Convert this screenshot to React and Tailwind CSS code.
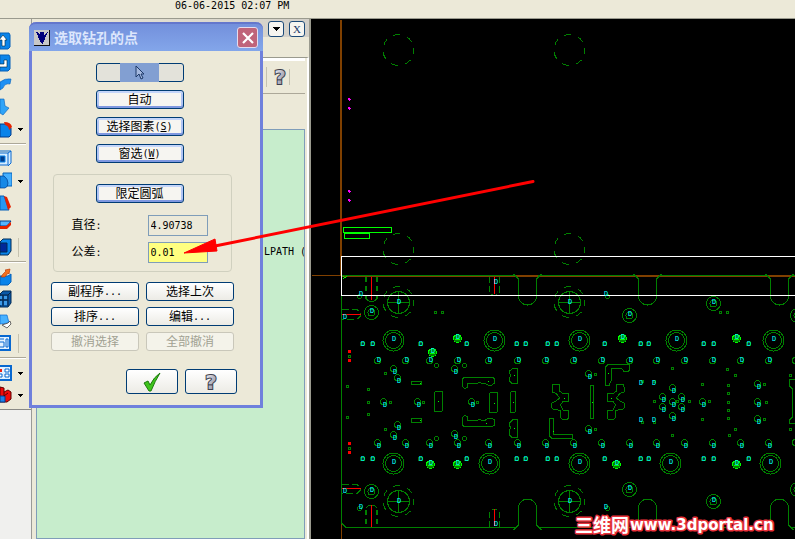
const MONO = "font-['DejaVu_Sans_Mono','Noto_Sans_CJK_SC',monospace]";

const blue = '#0a84ea';
const navy = '#003c8c';

const toolGroups = [
  [
    {
      label: 'Extrude up',
      art: (
        <>
          <path d="M0 1h9l1 2v12l-2 2H0z" fill={blue} stroke="#0560b8" />
          <path d="M2 14V8H-1l4-5 4 5H5v6z" fill="#fff" stroke="#023" strokeWidth=".6" />
        </>
      ),
    },
    {
      label: 'Extrude side',
      art: (
        <>
          <path d="M0 1h9l1 2v12l-2 2H0z" fill={blue} stroke="#0560b8" />
          <path d="M0 10h4V6h3v7H0" fill="#fff" stroke="#023" strokeWidth=".6" />
        </>
      ),
    },
    { label: 'Sweep', art: <path d="M0 6q5-4 11-3l-1 5q-5-1-7 4L0 14z" fill="#1e90f4" stroke="#0560b8" strokeWidth=".6" /> },
    { label: 'Loft', art: <path d="M0 1h4l1 7 4 2-6 7-3-2z" fill="#30a4f8" stroke="#0560b8" strokeWidth=".6" /> },
    {
      label: 'Fillet',
      caret: true,
      art: (
        <>
          <path d="M0 4h7l4 4v7l-2 2H0z" fill={blue} stroke={navy} />
          <path d="M4 2q7 0 8 5l-3 3q0-4-4-5z" fill="#e42200" />
        </>
      ),
    },
  ],
  [
    {
      label: 'Shell',
      art: (
        <>
          <path d="M0 3h8v12H0M8 3l3-2v12l-3 3M0 1h11" fill="#d6ecff" stroke="#0868d0" />
          <path d="M0 6h5v6H0z" fill={navy} stroke={blue} />
        </>
      ),
    },
    {
      label: 'Boolean',
      caret: true,
      art: (
        <>
          <path d="M3 1h9v13H3z" fill="#46b0ff" stroke="#0560b8" />
          <path d="M0 4h4q4 3 4 7t-3 5H0z" fill="#1688e6" stroke={navy} strokeWidth=".7" />
        </>
      ),
    },
    {
      label: 'Draft face',
      art: (
        <>
          <path d="M0 2h4l5 14H0z" fill="#2698f4" stroke="#0560b8" />
          <path d="M4 2l3 1 4 10-3 3z" fill="#e42200" />
        </>
      ),
    },
    {
      label: 'Trim solid',
      art: (
        <>
          <path d="M0 5h11l-4 5H0z" fill="#56b4ff" stroke={navy} />
          <path d="M0 10h6l5-4v3l-4 4H0z" fill="#e42200" />
        </>
      ),
    },
    {
      label: 'Thicken',
      split: true,
      art: (
        <>
          <path d="M0 4l3-3h8v12l-3 4H0z" fill={blue} stroke="#012a55" />
          <path d="M0 5h7v9H0z" fill="#00289a" stroke="#012a55" />
        </>
      ),
    },
  ],
  [
    {
      label: 'Remove faces',
      art: (
        <>
          <path d="M0 8h8l3-2v8l-3 3H0z" fill={blue} stroke="#0560b8" />
          <path d="M3 6l3-3-1-1 5-1-1 5-1-1-3 4H1z" fill="#f4701c" stroke="#b03000" strokeWidth=".6" />
        </>
      ),
    },
    {
      label: 'Box',
      art: (
        <>
          <path d="M0 4l3-3h8v12l-3 4H0z" fill="#0a58a8" stroke="#012a55" />
          <path d="M0 5h8v11M3 5v11M0 10h8M8 5l3-3" fill="none" stroke="#0b2240" />
          <path d="M0 6h2v3H0zM4 6h3v3H4zM0 11h2v4H0zM4 11h3v4H4z" fill="#3c9ae8" />
        </>
      ),
    },
    {
      label: 'Surface',
      art: (
        <>
          <path d="M0 3h7l2 8-9 1z" fill="#48b2ff" stroke="#0868d0" strokeWidth=".7" />
          <path d="M2 13l6-2 2-2 1 3-4 4z" fill="#fff" stroke="#444" strokeWidth=".8" />
        </>
      ),
    },
    {
      label: 'Layout',
      split: true,
      art: (
        <>
          <path d="M0 2h10v14H0" fill="#e4f2ff" stroke="#0868d0" strokeWidth="2" />
          <path d="M0 5h4M0 8h4v5H0M6 5h2v8H6z" fill="none" stroke="#0868d0" />
        </>
      ),
    },
  ],
  [
    {
      label: 'Views',
      caret: true,
      art: (
        <>
          <path d="M0 2h11v14H0" fill="#e4f2ff" stroke="#0868d0" strokeWidth="2" />
          <path d="M-1 5h3v3h-3z" fill="#f02010" />
          <path d="M5 5h4v3H5zM5 10h4v3H5zM-1 10h3v3h-3z" fill="#fff" stroke="#0868d0" />
        </>
      ),
    },
    {
      label: 'Planes',
      caret: true,
      art: (
        <>
          <path d="M0 1l4 1v4l4-2 3 2v7l-4 3H0z" fill="#f00a0a" stroke="#5a0000" />
          <path d="M0 10h5v6H0z" fill="#1c80e8" stroke={navy} />
          <path d="M4 6v4l4-3" fill="none" stroke="#5a0000" />
        </>
      ),
    },
  ],
];

// canvas data, in page pixels
const bossX = [377, 405, 429, 457, 488, 517, 545, 573, 601, 629, 656, 684, 712, 740, 768];
const pinX = [362, 372, 420, 466, 516, 525, 547, 556, 604, 640, 648, 703, 713, 748];
const pads = [[457, 338], [432, 352], [622, 338], [736, 338], [430, 464], [457, 464], [616, 464], [736, 464]];
const bores = [
  [393, 340], [494, 340], [579, 340], [676, 340], [773, 340],
  [393, 463], [489, 463], [579, 463], [670, 463], [770, 463],
];
const rings = [[371, 312], [629, 315], [713, 303], [371, 491], [629, 489], [713, 501]];
const holes = [
  [383, 402], [417, 402], [471, 402], [393, 369], [397, 378], [454, 369],
  [397, 425], [393, 435], [454, 434], [588, 374], [588, 429],
  [672, 388], [662, 397], [681, 397], [672, 402], [662, 407], [681, 407], [672, 416],
  [702, 402], [757, 384], [757, 402], [757, 419],
];
const dots = [
  [435, 312], [442, 312], [720, 312], [727, 312], [672, 368], [727, 369], [735, 375], [790, 375],
  [347, 386], [347, 417], [368, 389], [368, 402], [368, 414], [390, 402], [423, 402], [477, 402],
  [385, 373], [385, 429], [595, 374], [595, 429], [642, 381], [642, 422], [654, 381], [654, 422],
  [654, 401], [689, 401], [677, 401], [709, 401], [702, 384], [702, 419],
  [728, 385], [728, 393], [728, 402], [728, 410], [728, 418], [735, 429], [729, 435], [672, 435],
  [790, 429], [764, 384], [766, 402], [764, 419], [349, 356], [349, 448],
];
const drops = [[436, 365], [464, 365], [436, 438], [464, 438], [359, 296], [607, 296], [359, 508], [607, 508]];
const loneMarks = [
  [344, 317], [360, 294], [605, 294], [495, 282], [344, 491], [360, 507], [495, 524], [605, 507],
  [640, 383], [640, 420], [653, 383], [653, 420],
];
const ticks = [
  [420, 383], [420, 420], [438, 401], [488, 381], [486, 423], [494, 403], [513, 402], [514, 375],
  [514, 428], [553, 431], [564, 398], [592, 402], [611, 398], [608, 373],
];

function Mark({ x, y }) {
  return (
    <text x={x} y={y + 2} textAnchor="middle">
      D
    </text>
  );
}

const S_SHAPE =
  'M554 384.5H559.5V391L562 393H566Q568.5 393 568.5 395V401.500H563L560.500 405L563 410H568.500V417Q568.500 419.500 566 419.500H563Q560.500 419 560.500 416V411L557 409.500H554Q551.500 409 551.500 406V404Q552 402 555 401.500L560 398L556 393.500L552 392V387Q552 384.500 554 384.500Z';

function Drawing() {
  return (
    <svg className="min-w-0 flex-1 bg-black" shapeRendering="crispEdges" role="img" aria-label="Part drawing">
      <g transform="translate(-311 -19)" fill="none">
        <path d="M341 20V276" stroke="#804000" strokeWidth="2" />
        <path d="M312 275.500H341M341.500 524V2000" stroke="#804000" />
        <path d="M341 276H4000" stroke="#804000" strokeWidth="2" />

        <g stroke="#008000">
          <path d="M342 275.500H516M538 275.500H635M659 275.500H766M792 275.500H4000" />
          <path d="M341.500 296V523L346 527.500H515M540 527.500H634M660 527.500H767M792 527.500H4000" />
          {[518.5, 638.5, 770.5].map((x) => (
            <g key={x}>
              <path d={`M${x - 5} 274l5 5v17a9 9 0 0 0 18 0v-17l5-5`} />
              <path d={`M${x - 5} 530l5-5v-17a9 9 0 0 1 18 0v17l5 5`} />
            </g>
          ))}
          {[[398, 50], [569, 50], [398, 249], [569, 249], [398, 302], [569, 302], [398, 501], [569, 501]].map(([x, y]) => (
            <circle key={`${x}-${y}`} cx={x + 0.5} cy={y} r="15.500" strokeDasharray="7 7" strokeDashoffset="3" />
          ))}
          {[[398, 302], [569, 302], [398, 501], [569, 501]].map(([x, y]) => (
            <g key={`${x}-${y}`}>
              <circle cx={x + 0.5} cy={y + 0.5} r="11" />
              <path d={`M${x - 11} ${y + 0.5}h23M${x + 0.5} ${y - 11}v23`} />
            </g>
          ))}
          {bores.map(([x, y]) => (
            <g key={`${x}-${y}`}>
              <circle cx={x + 0.5} cy={y + 0.5} r="10.500" />
              <circle cx={x + 0.5} cy={y + 0.5} r="8" />
            </g>
          ))}
          {[...rings, [797, 315], [797, 489]].map(([x, y]) => (
            <g key={`${x}-${y}`}>
              <circle cx={x + 0.5} cy={y + 0.5} r="7" />
              <circle cx={x + 0.5} cy={y + 0.5} r="3.500" />
            </g>
          ))}
          {[...bossX, 795].map((x) => (
            <g key={x}>
              <circle cx={x + 0.5} cy="360.500" r="3" />
              <circle cx={x + 0.5} cy="442.500" r="3" />
            </g>
          ))}
          {pinX.map((x) => (
            <g key={x}>
              <circle cx={x + 0.5} cy="344" r="2" />
              <circle cx={x + 0.5} cy="459" r="2" />
            </g>
          ))}
          {holes.map(([x, y]) => (
            <circle key={`${x}-${y}`} cx={x + 0.5} cy={y - 0.5} r="3" />
          ))}
          {dots.map(([x, y]) => (
            <circle key={`${x}-${y}`} cx={x + 0.5} cy={y + 0.5} r="1" />
          ))}
          {drops.map(([x, y]) => (
            <circle key={`${x}-${y}`} cx={x + 0.5} cy={y + 0.5} r="2" />
          ))}

          {/* pockets */}
          <rect x="411.500" y="381.500" width="10" height="3" />
          <rect x="411.500" y="418.500" width="10" height="4" />
          <rect x="434.500" y="391.500" width="8" height="20" rx="1.500" />
          <rect x="489.500" y="392.500" width="8" height="20" rx="1.500" />
          <rect x="510.500" y="391.500" width="5" height="21" rx="1.500" />
          <rect x="590.500" y="385.500" width="3" height="33" />
          <path d="M465 377.500H492Q494.500 378 494.500 380V383L492 385H488L485 383.500H482L480 382L477 383.500H467.500V387L465 388.500Q462.500 388 462.500 385V380Q462.500 377.500 465 377.500Z" />
          <path d="M465 426.500H492Q494.500 426 494.500 424V420L492 418H488L485 420.500H482L480 419L477 420.500H467.500V417L465 415.500Q462.500 416 462.500 419V424Q463 426.500 465 426.500Z" />
          <path d="M513 368.500H517.500V383.500H512L509.500 381V378L511 376L509.500 373V371Z" />
          <path d="M513 419.500H517.500V437.500H512L509.500 435V430L511 428L509.500 426V423Z" />
          <path d="M549.500 418.500H553.500V434.500H572.500V438.500H552L549.500 436Z" />
          <path d="M605.500 385.500V367L608 364.500H629.500V370L628 371.500H624L621.500 368.500H611.500V380L609 385.500Z" />
          <path d={S_SHAPE} />
          <path d={S_SHAPE} transform="translate(1176 0) scale(-1 1)" />
          <path d="M796 379.500H789.500V386L792.500 389V417L789.500 420V423.500H796" />

          {/* clamp slots */}
          <path d="M366 277V299M377 277V299M366 510V527M377 510V527" strokeWidth="2" strokeDasharray="5 4" />
          <path d="M366 299l3 2h5l3-2M366 508l3-3h5l3 3" />
          <path d="M489.500 277V292l3 3h4l3-3V277M489.500 527V513l3-4h4l3 4V527" strokeDasharray="6 3" />
          <path d="M342 309.500H357l3 3v4l-3 3H342M342 484.500H357l3 3v3l-3 3H342" strokeDasharray="7 3" />
        </g>

        <g stroke="#f00">
          <path d="M371.500 277V300M371.500 505V527M494.500 277V294M494.500 509V526M342 314.500H361M342 488.500H361" />
        </g>
        <path d="M348 350h3v3h-3zM348 359h3v3h-3zM348 442h3v3h-3zM348 451h3v3h-3z" fill="#f00" />
        <path d="M348 98h2v1h1v1h-1v1h-1v-1h-1zM348 107h2v1h1v1h-1v1h-1v-1h-1zM348 190h2v1h1v1h-1v1h-1v-1h-1zM348 199h2v1h1v1h-1v1h-1v-1h-1z" fill="#f0f" />

        <g stroke="#0f0">
          <rect x="343.500" y="227.500" width="48" height="5" />
          <rect x="344.500" y="233.500" width="25" height="5" />
          {pads.map(([x, y]) => (
            <g key={`${x}-${y}`}>
              <circle cx={x + 0.5} cy={y + 0.5} r="4" fill="#008000" />
              <path d={`M${x - 2} ${y + 1}h5`} />
            </g>
          ))}
          {ticks.map(([x, y]) => (
            <path key={`${x}-${y}`} d={`M${x} ${y + 0.5}h1`} />
          ))}
          <path d="M343 279l5-4M343 276l3 3" strokeDasharray="1 1" />
        </g>

        <g stroke="#fff">
          <path d="M4000 256.500H341.500V295.500H4000" />
        </g>

        <g fill="#0ff" className="font-['DejaVu_Sans_Mono',monospace] text-[7px]">
          {bossX.map((x) => (
            <Mark key={`a${x}`} x={x + 2} y={360} />
          ))}
          {bossX.map((x) => (
            <Mark key={`b${x}`} x={x + 2} y={446} />
          ))}
          {pinX.map((x) => (
            <Mark key={`c${x}`} x={x + 1} y={344} />
          ))}
          {pinX.map((x) => (
            <Mark key={`d${x}`} x={x + 1} y={459} />
          ))}
          {[...bores, ...rings, ...pads].map(([x, y]) => (
            <Mark key={`${x}-${y}`} x={x + 1} y={y - 1} />
          ))}
          {holes.map(([x, y]) => (
            <Mark key={`${x}-${y}`} x={x + 2} y={y + 3} />
          ))}
          {[[398, 302], [569, 302], [398, 501], [569, 501], ...loneMarks].map(([x, y]) => (
            <Mark key={`${x}-${y}`} x={x + 1} y={y} />
          ))}
        </g>

        <g
          fill="#fff"
          stroke="#e8323c"
          strokeWidth="3"
          strokeLinejoin="round"
          paintOrder="stroke"
          shapeRendering="auto"
          className="font-['DejaVu_Sans','Noto_Sans_CJK_SC',sans-serif] font-bold"
        >
          <text x="575" y="532" className="text-[18px]">三维网</text>
          <text x="630" y="530" className="text-[15px]">www.3dportal.cn</text>
        </g>
      </g>
    </svg>
  );
}

function Toolbar() {
  return (
    <aside className="flex w-8 shrink-0 flex-col border-r border-[#9a9a96] bg-[#ece9d8] pt-[11px]">
      {toolGroups.map((group, i) => (
        <div key={i} className="flex flex-col">
          {i > 0 && <div className="my-[3px] mr-[5px] h-[2px] border-t border-[#aca899] bg-white" />}
          {group.map(({ label, art, caret, split }) => (
            <div key={label} className="flex h-[22px] items-center gap-[6px]">
              <button aria-label={label} className="h-[18px] w-3">
                <svg viewBox="0 0 12 18" className="h-[18px] w-3">
                  {art}
                </svg>
              </button>
              {caret && (
                <button aria-label={`${label} options`}>
                  <svg viewBox="0 0 5 3" className="h-[3px] w-[5px]" shapeRendering="crispEdges">
                    <path d="M0 0h5L2.500 3z" />
                  </svg>
                </button>
              )}
              {split && <span className="h-[19px] w-px bg-[#c5c2b0]" />}
            </div>
          ))}
        </div>
      ))}
      <div className="mt-[3px] flex-1 border-t border-[#8a8a86] bg-[#f0f0ee]" />
    </aside>
  );
}

function HelpGlyph() {
  return (
    <svg viewBox="0 0 18 24" className="h-6 w-[18px]" aria-hidden="true">
      <defs>
        <linearGradient id="steel" x1="0" y1="0" x2="1" y2="1">
          <stop offset="0" stopColor="#fff" />
          <stop offset="1" stopColor="#74748c" />
        </linearGradient>
      </defs>
      <text
        x="9"
        y="19"
        textAnchor="middle"
        fill="url(#steel)"
        stroke="#40404c"
        strokeWidth="2"
        paintOrder="stroke"
        className="font-['DejaVu_Sans',sans-serif] text-[20px] font-bold"
      >
        ?
      </text>
    </svg>
  );
}

function OperationsPanel() {
  const small = 'flex h-4 w-4 items-center justify-center rounded-[3px] border border-[#1c4a78] bg-[#f6f5f0]';
  return (
    <section className="flex w-[279px] shrink-0 flex-col border-r-2 border-[#9a9a8e] bg-[#ece9d8]">
      <header className="flex h-[18px] items-end justify-end gap-[5px] bg-gradient-to-r from-[#ece9d8] to-[#d2cfc8] pr-1">
        <button aria-label="Panel menu" className={small}>
          <svg viewBox="0 0 7 4" className="h-1 w-[7px]" shapeRendering="crispEdges">
            <path d="M0 0h7L3.500 4z" />
          </svg>
        </button>
        <button aria-label="Close panel" className={`${small} font-['Liberation_Serif',serif] text-[11px] leading-none text-[#1c3a68]`}>
          X
        </button>
      </header>
      <div className="mt-5 flex flex-1 flex-col border-t border-r-2 border-t-[#9a9a8e] border-r-white">
        <div className="mr-[2px] flex h-9 items-center justify-end border-t-[3px] border-b border-t-white border-b-[#aca899] pr-[15px]">
          <span className="h-5 w-px bg-[#c5c2b0]" />
          <button aria-label="Help" className="ml-1 flex w-[18px] justify-center">
            <HelpGlyph />
          </button>
          <span className="h-4 w-px bg-[#c5c2b0]" />
        </div>
        <div className={`mt-[35px] mr-[2px] ml-1 flex-1 overflow-hidden border border-[#7f9db9] bg-[#c7edcc] pt-[114px] pl-[227px] text-[10px] leading-4 whitespace-nowrap ${MONO}`}>
          LPATH (
        </div>
      </div>
    </section>
  );
}

function XpButton({ children, label, accent, disabled, className = 'h-[19px] w-[88px]' }) {
  const tone = disabled
    ? 'border-[#c9c7ba] bg-[#f4f3ea] text-[#a1a192]'
    : accent
      ? 'border-[#003c74] bg-[#f6f5f1] text-black shadow-[inset_0_-2px_0_#7f98e0,inset_0_2px_0_#c4d5fa,inset_2px_0_0_#b0c4f4,inset_-2px_0_0_#b0c4f4]'
      : 'border-[#003c74] bg-gradient-to-b from-white to-[#ecebe5] text-black';
  return (
    <button
      aria-label={label}
      disabled={disabled}
      className={`flex items-center justify-center rounded-[3px] border text-[12px] leading-none whitespace-nowrap ${tone} ${className}`}
    >
      {children}
    </button>
  );
}

function Latin({ children }) {
  return <span className="text-[10px]">{children}</span>;
}

function DrillDialog() {
  return (
    <div
      role="dialog"
      aria-label="选取钻孔的点"
      className={`absolute top-[22px] left-[29px] w-[234px] rounded-t-[7px] border-x-[3px] border-b-[3px] border-[#6f80dc] bg-[#ece9d8] ${MONO}`}
    >
      <div className="-mx-[3px] flex h-[29px] items-center rounded-t-[7px] border-t-2 border-[#6477cc] bg-gradient-to-b from-[#7390dc] to-[#83a6ea] pr-[5px] pl-[5px]">
        <svg viewBox="0 0 16 16" className="h-4 w-4" shapeRendering="crispEdges" aria-hidden="true">
          <path d="M0 0h16v16H0z" fill="#111" />
          <path d="M0 0h15v15H0z" fill="#c8c8c8" />
          <path d="M2 2h1l3 3V2h4v3l3-3h1l-5 11-1 1-1-1z" fill="#00007c" />
        </svg>
        <h1 className="ml-1 flex-1 text-[14px] leading-5 font-bold text-[#dce6fc]">选取钻孔的点</h1>
        <button aria-label="Close" className="flex h-[21px] w-[21px] items-center justify-center rounded-[3px] border border-[#e4dcee] bg-[#c0647a]">
          <svg viewBox="0 0 12 12" className="h-3 w-3">
            <path d="M1 1l10 10M11 1L1 11" stroke="#fff" strokeWidth="2.200" />
          </svg>
        </button>
      </div>

      <div className="flex flex-col items-center pt-3 pr-[7px]">
        <div className="flex flex-col gap-2 pr-[6px]">
          <button aria-label="Pick point" className="flex h-[19px] w-[88px] items-center justify-center rounded-[3px] border border-[#003c74] bg-[#e3e2da]">
            <span className="flex h-[19px] w-[39px] items-center justify-center bg-[#829fd2]">
              <svg viewBox="0 0 10 16" className="h-4 w-[10px]">
                <path d="M1 1v11l3-3 2 5 2-1-2-4h3z" fill="#a4b8de" stroke="#1c3868" />
              </svg>
            </span>
          </button>
          <XpButton accent>自动</XpButton>
          <XpButton accent>
            选择图素<Latin>(<u>S</u>)</Latin>
          </XpButton>
          <XpButton accent>
            窗选<Latin>(<u>W</u>)</Latin>
          </XpButton>
        </div>

        <fieldset className="mt-[11px] flex w-[179px] flex-col items-center rounded-[4px] border border-[#d0d0bf] pt-[9px] pr-[6px] pb-2">
          <XpButton accent>限定圆弧</XpButton>
          <div className="mt-3 flex flex-col gap-[6px] text-[12px]">
            <div className="flex items-center">
              <label htmlFor="diameter" className="w-[76px] leading-4">直径<Latin>:</Latin></label>
              <input id="diameter" defaultValue="4.90738" className="h-[21px] w-[60px] border border-[#7f9db9] bg-[#ece9d8] px-[2px] text-[10px]" />
            </div>
            <div className="flex items-center">
              <label htmlFor="tolerance" className="w-[76px] leading-4">公差<Latin>:</Latin></label>
              <input id="tolerance" defaultValue="0.01" className="h-[21px] w-[60px] border border-[#7f9db9] bg-[#ffff80] px-[2px] text-[10px]" />
            </div>
          </div>
        </fieldset>

        <div className="mt-[10px] grid grid-cols-2 gap-x-[7px] gap-y-[6px]">
          <XpButton>副程序<Latin>...</Latin></XpButton>
          <XpButton>选择上次</XpButton>
          <XpButton>排序<Latin>...</Latin></XpButton>
          <XpButton>编辑<Latin>...</Latin></XpButton>
          <XpButton disabled>撤消选择</XpButton>
          <XpButton disabled>全部撤消</XpButton>
        </div>
      </div>

      <div className="mt-[18px] mb-[11px] flex justify-end gap-[7px] pr-[23px]">
        <XpButton label="OK" className="h-[25px] w-[52px]">
          <svg viewBox="0 0 20 20" className="h-5 w-5">
            <path d="M2 11l4-2 2 4Q12 5 18 1 13 9 9 19H7z" fill="#3fc41c" stroke="#1c7a0c" />
          </svg>
        </XpButton>
        <XpButton label="Help" className="h-[25px] w-[52px]">
          <HelpGlyph />
        </XpButton>
      </div>
    </div>
  );
}

export default function App() {
  return (
    <div className="relative flex min-h-screen flex-col overflow-hidden bg-[#ece9d8] text-black">
      <div className={`h-[19px] border-b border-[#9a9a8e] pl-[175px] text-[10px] leading-[11px] whitespace-nowrap ${MONO}`}>
        06-06-2015 02:07 PM
      </div>
      <main className="flex flex-1">
        <Toolbar />
        <OperationsPanel />
        <Drawing />
      </main>
      <DrillDialog />
      <svg className="pointer-events-none absolute top-[180px] left-[183px] h-[76px] w-[352px]" viewBox="183 180 352 76" aria-hidden="true">
        <path d="M533 181.500L210 247" stroke="#f00" strokeWidth="3" strokeLinecap="round" />
        <path d="M184 253L215 239L217 251Z" fill="#f00" stroke="#f00" />
      </svg>
    </div>
  );
}
